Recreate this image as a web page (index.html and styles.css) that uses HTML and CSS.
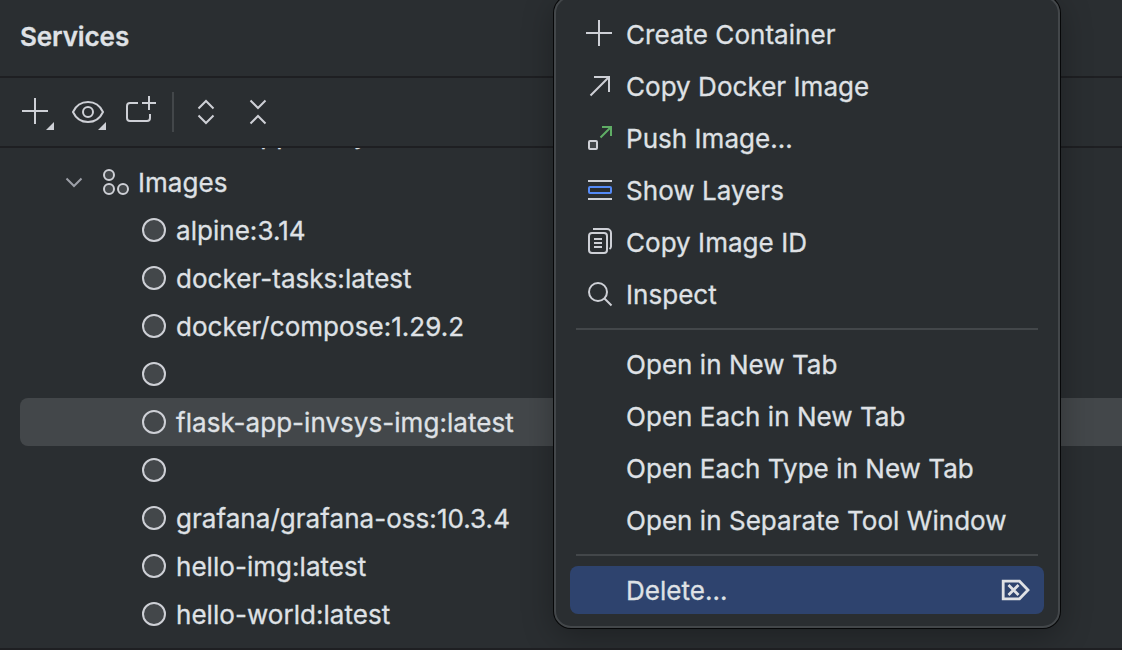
FILE: index.html
```html
<!DOCTYPE html>
<html lang="en">
<head>
<meta charset="utf-8">
<title>Services</title>
<link rel="stylesheet" href="styles.css">
</head>
<body>
<main class="window">
  <header class="header">Services</header>
  <nav class="toolbar">
    <svg class="tool" viewBox="0 0 36 36"><path d="M17 4v26M4 17h26"/><path class="solid" d="M36 28v8h-8z"/></svg>
    <svg class="tool" viewBox="0 0 36 36"><path d="M3 18C6 11.500 12 8 18 8s12 3.500 15 10c-3 6.500-9 10-15 10S6 24.500 3 18z"/><circle cx="18" cy="18" r="5"/><path class="solid" d="M36 28v8h-8z"/></svg>
    <svg class="tool" viewBox="0 0 36 36"><path d="M16 9H8a3 3 0 0 0-3 3v12a3 3 0 0 0 3 3h17a3 3 0 0 0 3-3v-4M27 2v14M20 9h14"/></svg>
    <span class="tool-divider"></span>
    <svg class="tool" viewBox="0 0 36 36"><path d="M10.500 14.500L18 7l7.500 7.500M10.500 21.500L18 29l7.500-7.500"/></svg>
    <svg class="tool" viewBox="0 0 36 36"><path d="M10.500 6.500L18 14l7.500-7.500M10.500 29.500L18 22l7.500 7.500"/></svg>
  </nav>
  <section class="tree">
    <div class="row clipped"><span class="node"></span><span class="label">flask-app-invsys</span></div>
    <div class="row group">
      <svg class="chevron" viewBox="0 0 20 20"><path d="M2.500 6.500L10 14l7.500-7.500"/></svg>
      <svg class="images" viewBox="0 0 28 28"><circle cx="7" cy="7" r="5"/><circle cx="7" cy="21" r="5"/><circle cx="21" cy="21" r="5"/></svg>
      <span class="label">Images</span>
    </div>
    <div class="row"><span class="node"></span><span class="label">alpine:3.14</span></div>
    <div class="row"><span class="node"></span><span class="label">docker-tasks:latest</span></div>
    <div class="row"><span class="node"></span><span class="label">docker/compose:1.29.2</span></div>
    <div class="row"><span class="node"></span></div>
    <div class="row selected"><span class="node"></span><span class="label">flask-app-invsys-img:latest</span></div>
    <div class="row"><span class="node"></span></div>
    <div class="row"><span class="node"></span><span class="label">grafana/grafana-oss:10.3.4</span></div>
    <div class="row"><span class="node"></span><span class="label">hello-img:latest</span></div>
    <div class="row"><span class="node"></span><span class="label">hello-world:latest</span></div>
  </section>
  <div class="menu">
    <div class="item"><svg class="icon" viewBox="0 0 32 32"><path d="M15 2v26M2 15h26"/></svg><span class="label">Create Container</span></div>
    <div class="item"><svg class="icon" viewBox="0 0 32 32"><path d="M6.500 25.500L25 7M10 7h15v15"/></svg><span class="label">Copy Docker Image</span></div>
    <div class="item"><svg class="icon" viewBox="0 0 32 32"><rect class="fill" x="5" y="19" width="8" height="8" rx="1"/><path class="green" d="M16.500 15.500L27 5M18 5h9v9"/></svg><span class="label">Push Image...</span></div>
    <div class="item"><svg class="icon" viewBox="0 0 32 32"><path d="M4 7h24M4 25h24"/><rect class="blue" x="5" y="13" width="22" height="6" rx="1"/></svg><span class="label">Show Layers</span></div>
    <div class="item"><svg class="icon" viewBox="0 0 32 32"><rect x="5" y="7" width="18" height="20" rx="3"/><path d="M9 3h14a4 4 0 0 1 4 4v13.500q0 1.500-1.500 2.500M10 13h8M10 17h8M10 21h8"/></svg><span class="label">Copy Image ID</span></div>
    <div class="item"><svg class="icon" viewBox="0 0 32 32"><circle cx="14" cy="14" r="9"/><path d="M20.500 20.500l7 7"/></svg><span class="label">Inspect</span></div>
    <hr class="separator">
    <div class="item"><span class="label">Open in New Tab</span></div>
    <div class="item"><span class="label">Open Each in New Tab</span></div>
    <div class="item"><span class="label">Open Each Type in New Tab</span></div>
    <div class="item"><span class="label">Open in Separate Tool Window</span></div>
    <hr class="separator">
    <div class="item active"><span class="label">Delete...</span><svg class="delete-key" viewBox="0 0 30 22"><path d="M2.200 2.200H18.500L27 11l-8.500 8.800H2.200z"/><path d="M7.500 6l10 10M17.500 6l-10 10"/></svg></div>
  </div>
</main>
</body>
</html>
```
FILE: styles.css
```css
* { box-sizing: border-box; }
body {
  margin: 0;
  background: #2a2e31;
  color: #dfe1e5;
  font: 26px/48px Inter, sans-serif;
  font-feature-settings: "calt" 0;
}
.window {
  position: relative;
  display: flex;
  flex-direction: column;
  width: 1122px;
  height: 650px;
  overflow: hidden;
  border-bottom: 2px solid #1e1f22;
  white-space: nowrap;
}
svg {
  flex: none;
  fill: none;
  stroke: #ced0d6;
  stroke-width: 2;
}
.header {
  flex: none;
  height: 78px;
  padding: 13px 20px 0;
  border-bottom: 2px solid #1e1f22;
  font-weight: 600;
  letter-spacing: -0.1px;
  -webkit-text-stroke: 0.3px;
}
.toolbar {
  flex: none;
  display: flex;
  align-items: center;
  gap: 16px;
  height: 70px;
  padding: 0 18px;
  border-bottom: 2px solid #1e1f22;
}
.tool { width: 36px; height: 36px; }
.tool .solid { fill: #ced0d6; stroke: none; }
.tool-divider {
  width: 2px;
  height: 40px;
  margin: 0 -2px 0 -2px;
  background: #43474a;
}
.tree {
  flex: 1;
  min-height: 0;
  display: flex;
  flex-direction: column;
  overflow: hidden;
}
.row {
  flex: none;
  display: flex;
  align-items: center;
  gap: 10px;
  height: 48px;
  margin-left: 20px;
  padding-left: 122px;
}
.label {
  padding-top: 2px;
  letter-spacing: 0.04px;
  -webkit-text-stroke: 0.3px;
}
.clipped { margin-top: -38px; }
.group { padding-left: 44px; gap: 0; }
.chevron { width: 20px; height: 20px; margin-right: 18px; stroke: #9da0a8; }
.images { width: 28px; height: 28px; margin-right: 8px; }
.images circle { fill: #43474a; }
.node {
  width: 24px;
  height: 24px;
  border: 2px solid #ced0d6;
  border-radius: 50%;
  background: #43474a;
}
.selected {
  border-radius: 8px 0 0 8px;
  background: #43474a;
}
.menu {
  position: absolute;
  top: -4px;
  left: 554px;
  width: 506px;
  height: 632px;
  display: flex;
  flex-direction: column;
  gap: 4px;
  padding: 12px 14px;
  border: 2px solid #43474a;
  border-radius: 17px;
  background: #2a2e31;
  box-shadow: 0 0 0 1px #060708, 0 8px 32px rgba(0, 0, 0, .3);
}
.item {
  flex: none;
  display: flex;
  align-items: center;
  height: 48px;
  padding-left: 56px;
  border-radius: 8px;
}
.icon { width: 32px; height: 32px; margin: 0 10px 0 -42px; }
.icon .fill { fill: #43474a; }
.icon .green { stroke: #5fad65; }
.icon .blue { stroke: #548af7; }
.separator {
  flex: none;
  width: 462px;
  height: 2px;
  margin: 6px;
  border: 0;
  background: #43474a;
}
.active { background: #2e436e; }
.delete-key {
  width: 30px;
  height: 22px;
  margin: 0 13px 0 auto;
  stroke: #dfe1e5;
  stroke-width: 2.8;
}
```
